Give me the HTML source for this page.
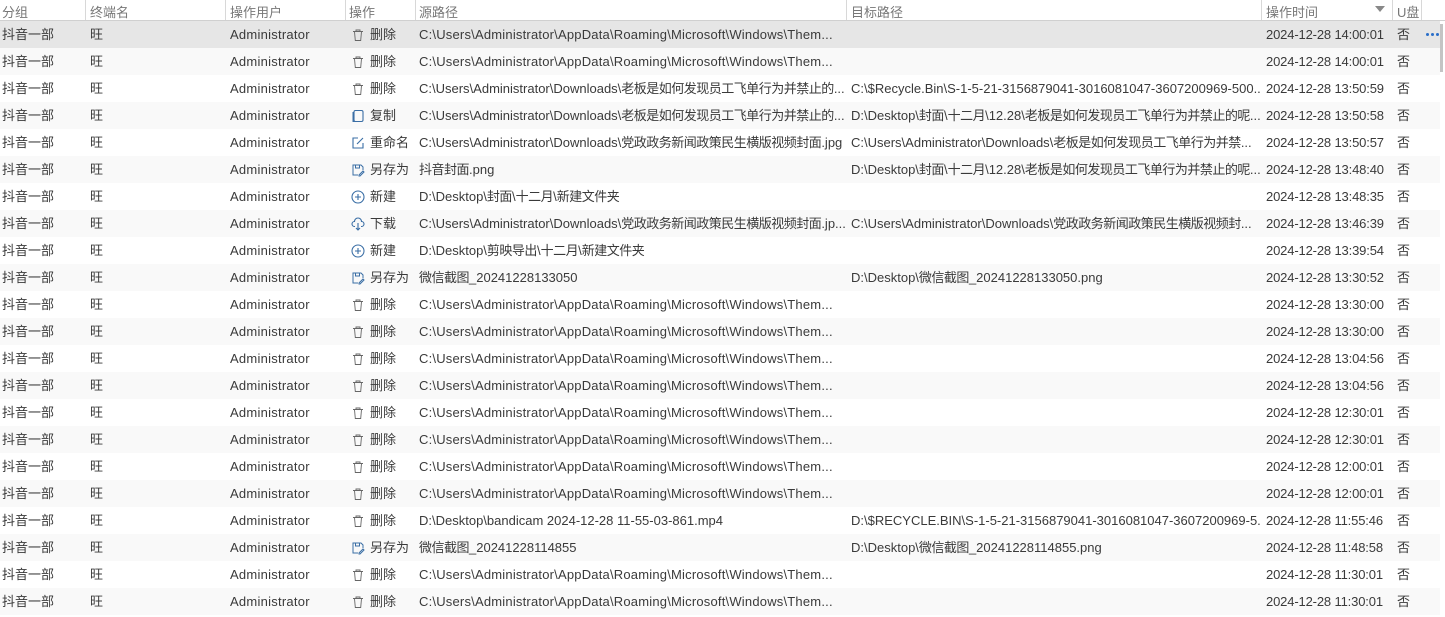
<!DOCTYPE html><html><head><meta charset="utf-8"><style>
body{margin:0;width:1445px;height:617px;overflow:hidden;background:#fff;font-family:"Liberation Sans","Noto Sans CJK SC",sans-serif;font-size:13px;letter-spacing:0.2px;color:#3a3a3a}
.h{position:absolute;top:0;left:0;width:1445px;height:20px;border-bottom:1px solid #d0d0d0;color:#777;background:#fff;letter-spacing:0}
.h span{position:absolute;top:2px}
.h i{position:absolute;top:0;width:1px;height:20px;background:#d8d8d8}
.r{position:absolute;left:0;width:1440px;height:27px;line-height:27px}
.r>span{position:absolute;top:0;white-space:nowrap;overflow:hidden}
.r svg{position:absolute;left:351px;top:7px}
.c{letter-spacing:-0.5px}
.z{letter-spacing:0}
.odd{background:#fff}.ev{background:#f9f9f9}.sel{background:#e6e6e6}
</style></head><body>
<div class="h"><span style="left:2px">分组</span><i style="left:85px"></i><span style="left:90px">终端名</span><i style="left:225px"></i><span style="left:230px">操作用户</span><i style="left:345px"></i><span style="left:349px">操作</span><i style="left:415px"></i><span style="left:419px">源路径</span><i style="left:846px"></i><span style="left:851px">目标路径</span><i style="left:1261px"></i><span style="left:1266px">操作时间</span><span style="left:1375px;top:6px;width:0;height:0;border-left:5px solid transparent;border-right:5px solid transparent;border-top:6px solid #888"></span><i style="left:1392px"></i><span style="left:1397px">U盘</span><i style="left:1421px"></i></div>
<svg width="0" height="0" style="position:absolute"><defs>
<symbol id="del" viewBox="0 0 14 14"><path d="M2 3.5h10M5 3.5V2h4v1.5M3.5 3.5l.8 9h5.4l.8-9" fill="none" stroke="#666" stroke-width="0.9"/></symbol>
<symbol id="cp" viewBox="0 0 14 14"><rect x="3" y="1.5" width="9" height="11" rx="1.5" fill="none" stroke="#3a6ea5" stroke-width="1.1"/><path d="M2 3v9.5h8" fill="none" stroke="#3a6ea5"/></symbol>
<symbol id="rn" viewBox="0 0 14 14"><path d="M7 2H2v10h10V7M6 8l6-6" fill="none" stroke="#3a6ea5" stroke-width="1.1"/></symbol>
<symbol id="sv" viewBox="0 0 14 14"><path d="M7 12H2V2h8l2 2v3M4.5 2v3h4V2M8 12l4-4 1 1-4 4H8z" fill="none" stroke="#3a6ea5" stroke-width="1"/></symbol>
<symbol id="nw" viewBox="0 0 14 14"><circle cx="7" cy="7" r="6" fill="none" stroke="#3a6ea5" stroke-width="1.1"/><path d="M7 4v6M4 7h6" stroke="#3a6ea5" stroke-width="1.1"/></symbol>
<symbol id="dl" viewBox="0 0 14 14"><path d="M4 9.5H3.5a2.5 2.5 0 0 1 0-5 3.5 3.5 0 0 1 7 0 2.5 2.5 0 0 1 0 5H10M7 6v7M5 11l2 2 2-2" fill="none" stroke="#3a6ea5" stroke-width="1.1"/></symbol>
</defs></svg>
<div id="rows"></div>
<div style="position:absolute;z-index:5;left:1440px;top:24px;width:3px;height:48px;background:#c4c4c4"></div>
<div style="position:absolute;z-index:5;left:1426px;top:33px;display:flex;gap:2px"><b style="width:3px;height:3px;border-radius:50%;background:#2a6fc9"></b><b style="width:3px;height:3px;border-radius:50%;background:#2a6fc9"></b><b style="width:3px;height:3px;border-radius:50%;background:#2a6fc9"></b></div>
<script>
var T="C:\\Users\\Administrator\\AppData\\Roaming\\Microsoft\\Windows\\Them...";
var D=[
["del","删除",T,"","2024-12-28 14:00:01"],
["del","删除",T,"","2024-12-28 14:00:01"],
["del","删除","C:\\Users\\Administrator\\Downloads\\老板是如何发现员工飞单行为并禁止的...","C:\\$Recycle.Bin\\S-1-5-21-3156879041-3016081047-3607200969-500...","2024-12-28 13:50:59"],
["cp","复制","C:\\Users\\Administrator\\Downloads\\老板是如何发现员工飞单行为并禁止的...","D:\\Desktop\\封面\\十二月\\12.28\\老板是如何发现员工飞单行为并禁止的呢...","2024-12-28 13:50:58"],
["rn","重命名","C:\\Users\\Administrator\\Downloads\\党政政务新闻政策民生横版视频封面.jpg","C:\\Users\\Administrator\\Downloads\\老板是如何发现员工飞单行为并禁...","2024-12-28 13:50:57"],
["sv","另存为","抖音封面.png","D:\\Desktop\\封面\\十二月\\12.28\\老板是如何发现员工飞单行为并禁止的呢...","2024-12-28 13:48:40"],
["nw","新建","D:\\Desktop\\封面\\十二月\\新建文件夹","","2024-12-28 13:48:35"],
["dl","下载","C:\\Users\\Administrator\\Downloads\\党政政务新闻政策民生横版视频封面.jp...","C:\\Users\\Administrator\\Downloads\\党政政务新闻政策民生横版视频封...","2024-12-28 13:46:39"],
["nw","新建","D:\\Desktop\\剪映导出\\十二月\\新建文件夹","","2024-12-28 13:39:54"],
["sv","另存为","微信截图_20241228133050","D:\\Desktop\\微信截图_20241228133050.png","2024-12-28 13:30:52"],
["del","删除",T,"","2024-12-28 13:30:00"],
["del","删除",T,"","2024-12-28 13:30:00"],
["del","删除",T,"","2024-12-28 13:04:56"],
["del","删除",T,"","2024-12-28 13:04:56"],
["del","删除",T,"","2024-12-28 12:30:01"],
["del","删除",T,"","2024-12-28 12:30:01"],
["del","删除",T,"","2024-12-28 12:00:01"],
["del","删除",T,"","2024-12-28 12:00:01"],
["del","删除","D:\\Desktop\\bandicam 2024-12-28 11-55-03-861.mp4","D:\\$RECYCLE.BIN\\S-1-5-21-3156879041-3016081047-3607200969-5...","2024-12-28 11:55:46"],
["sv","另存为","微信截图_20241228114855","D:\\Desktop\\微信截图_20241228114855.png","2024-12-28 11:48:58"],
["del","删除",T,"","2024-12-28 11:30:01"],
["del","删除",T,"","2024-12-28 11:30:01"]];
function f(s){return s.replace(/([\u4e00-\u9fff]+)/g,'<span class="c">$1</span>');}
var h="";D.forEach(function(d,i){var c=i==0?"sel":(i%2?"ev":"odd");
h+='<div class="r '+c+'" style="top:'+(21+27*i)+'px"><span style="left:2px;letter-spacing:0">抖音一部</span><span style="left:90px">旺</span><span style="left:230px;letter-spacing:0.25px">Administrator</span><svg width="14" height="14"><use href="#'+d[0]+'"/></svg><span style="left:370px;letter-spacing:0">'+d[1]+'</span><span class="'+(d[2]==T?'':'z')+'" style="left:419px;width:426px">'+f(d[2])+'</span><span class="z" style="left:851px;width:409px">'+f(d[3])+'</span><span style="left:1266px;letter-spacing:-0.15px">'+d[4]+'</span><span style="left:1397px">否</span></div>';});
document.getElementById("rows").innerHTML=h;
</script>
</body></html>
